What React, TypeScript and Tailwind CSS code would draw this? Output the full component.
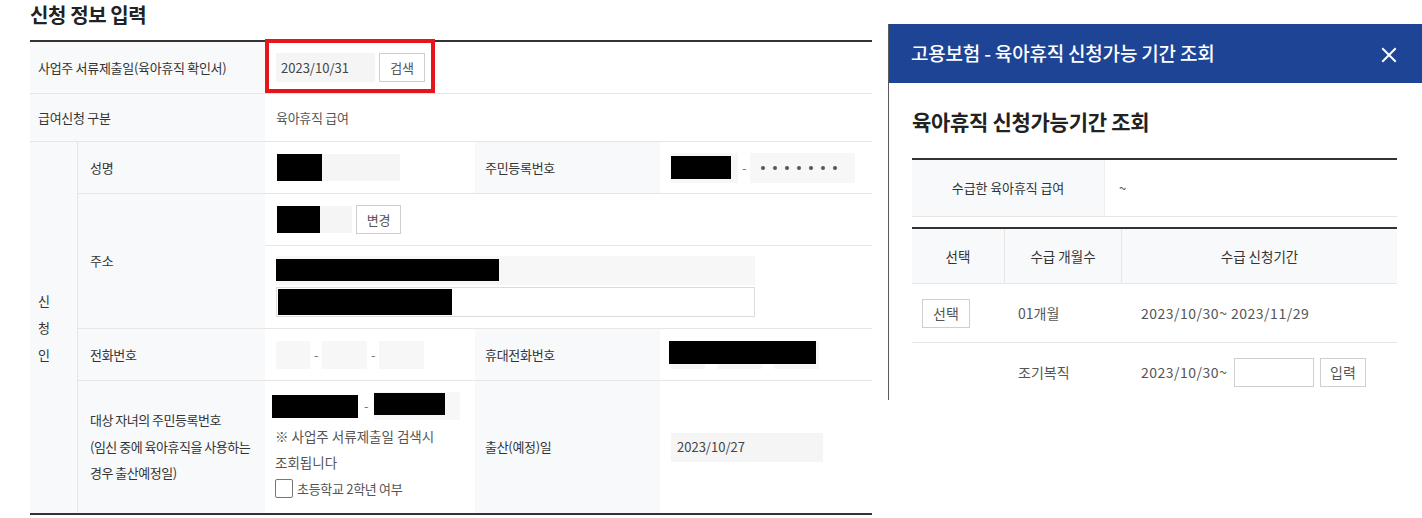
import React from "react";

const LBG = "bg-[#f8f9fb]";

function Btn({ children, w = "w-[46px]", size = "text-[13px]" }: { children: React.ReactNode; w?: string; size?: string }) {
  return (
    <div className={`${w} ${size} h-[29px] border border-[#cfcfcf] bg-white flex items-center justify-center text-[#555] shrink-0`}>
      {children}
    </div>
  );
}

function Dash() {
  return <span className="w-[12px] text-center text-[#777] shrink-0">-</span>;
}

export default function App() {
  return (
    <div className="relative w-[1422px] h-[518px] bg-white overflow-hidden font-['Noto_Sans_CJK_KR',sans-serif] text-[13px] tracking-[-0.3px] text-[#333]">
      {/* Main form */}
      <div className="pl-[30px] pt-[2px]">
        <h2 className="text-[20px] font-bold leading-[26px] h-[38px] text-[#222] tracking-[-0.4px]">신청 정보 입력</h2>
        <div className="w-[842px] border-t-2 border-b-2 border-[#333]">
          {/* row 1 */}
          <div className="flex h-[52px] border-b border-[#e6e6e6]">
            <div className={`w-[235px] ${LBG} flex items-center pl-2`}>사업주 서류제출일(육아휴직 확인서)</div>
            <div className="relative flex-1 flex items-center pl-[11px] gap-[4px]">
              <div className="w-[99px] h-[29px] bg-[#f5f5f5] flex items-center pl-[5px] text-[#444] tracking-normal">2023/10/31</div>
              <Btn>검색</Btn>
              <div className="absolute left-0 top-[-3px] w-[170px] h-[54px] border-4 border-[#e8141c]" />
            </div>
          </div>
          {/* row 2 */}
          <div className="flex h-[48px] border-b border-[#e6e6e6]">
            <div className={`w-[235px] ${LBG} flex items-center pl-2`}>급여신청 구분</div>
            <div className="flex-1 flex items-center pl-[11px] text-[#555]">육아휴직 급여</div>
          </div>
          {/* applicant group */}
          <div className="flex">
            <div className={`w-[48px] ${LBG} border-r border-[#e6e6e6] flex items-center pl-2 leading-[27px]`}>
              신<br />청<br />인
            </div>
            <div className="flex-1 flex flex-col">
              {/* 성명 */}
              <div className="flex h-[52px] border-b border-[#e6e6e6]">
                <div className={`w-[187px] ${LBG} flex items-center pl-3`}>성명</div>
                <div className="w-[210px] flex items-center pl-[12px]">
                  <div className="w-[123px] h-[27px] bg-[#f5f5f5]">
                    <div className="w-[45px] h-full bg-black" />
                  </div>
                </div>
                <div className={`w-[185px] ${LBG} flex items-center pl-[10px]`}>주민등록번호</div>
                <div className="flex-1 flex items-center pl-[11px]">
                  <div className="w-[67px] h-[30px] bg-[#f7f7f7] pt-[3px]">
                    <div className="w-[60px] h-[23px] bg-black" />
                  </div>
                  <Dash />
                  <div className="w-[105px] h-[30px] bg-[#f7f7f7] flex items-center pl-[11px] gap-[8px]">
                    {[0, 1, 2, 3, 4, 5, 6].map((i) => (
                      <span key={i} className="w-[4px] h-[4px] rounded-full bg-[#555]" />
                    ))}
                  </div>
                </div>
              </div>
              {/* 주소 */}
              <div className="flex h-[135px] border-b border-[#e6e6e6]">
                <div className={`w-[187px] ${LBG} flex items-center pl-3`}>주소</div>
                <div className="flex-1 flex flex-col">
                  <div className="h-[52px] border-b border-[#e6e6e6] flex items-center pl-[12px]">
                    <div className="w-[75px] h-[27px] bg-[#f5f5f5]">
                      <div className="w-[43px] h-full bg-black" />
                    </div>
                    <div className="ml-[4px]">
                      <Btn w="w-[45px]">변경</Btn>
                    </div>
                  </div>
                  <div className="flex-1 flex flex-col pl-[11px] pt-[10px] gap-[2px]">
                    <div className="w-[479px] h-[29px] bg-[#f7f7f7] pt-[3px]">
                      <div className="w-[223px] h-[22px] bg-black" />
                    </div>
                    <div className="w-[479px] h-[30px] border border-[#dcdcdc] bg-white p-[1px]">
                      <div className="w-[174px] h-full bg-black" />
                    </div>
                  </div>
                </div>
              </div>
              {/* 전화번호 */}
              <div className="flex h-[52px] border-b border-[#e6e6e6]">
                <div className={`w-[187px] ${LBG} flex items-center pl-3`}>전화번호</div>
                <div className="w-[210px] flex items-center pl-[11px]">
                  <div className="w-[34px] h-[28px] bg-[#f7f7f7]" />
                  <Dash />
                  <div className="w-[45px] h-[28px] bg-[#f7f7f7]" />
                  <Dash />
                  <div className="w-[45px] h-[28px] bg-[#f7f7f7]" />
                </div>
                <div className={`w-[185px] ${LBG} flex items-center pl-[10px]`}>휴대전화번호</div>
                <div className="flex-1 flex items-center pl-[11px]">
                  <div className="relative flex items-center">
                    <div className="w-[34px] h-[28px] bg-[#f7f7f7]" />
                    <Dash />
                    <div className="w-[45px] h-[28px] bg-[#f7f7f7]" />
                    <Dash />
                    <div className="w-[45px] h-[28px] bg-[#f7f7f7]" />
                    <div className="absolute left-[-2px] top-0 w-[147px] h-[23px] bg-black" />
                  </div>
                </div>
              </div>
              {/* 자녀 */}
              <div className="flex h-[132px]">
                <div className={`w-[187px] ${LBG} flex items-center pl-3 leading-[26.5px] tracking-[-0.5px]`}>
                  <div>
                    대상 자녀의 주민등록번호
                    <br />
                    (임신 중에 육아휴직을 사용하는
                    <br />
                    경우 출산예정일)
                  </div>
                </div>
                <div className="w-[210px] flex flex-col pl-[7px] pt-[11px]">
                  <div className="flex items-center h-[28px]">
                    <div className="w-[86px] h-[23px] bg-black" />
                    <div className="w-[16px] text-center text-[#777]">-</div>
                    <div className="w-[86px] h-[28px] bg-[#f7f7f7] pt-[1px]">
                      <div className="w-[71px] h-[22px] bg-black" />
                    </div>
                  </div>
                  <div className="mt-[3px] pl-[3px] leading-[26px] text-[#555] text-[13.5px] tracking-normal">
                    ※ 사업주 서류제출일 검색시
                    <br />
                    조회됩니다
                  </div>
                  <div className="mt-[4px] pl-[3px] flex items-center gap-[4px] h-[19px] text-[#555]">
                    <span className="w-[18px] h-[19px] border border-[#777] rounded-[2px] bg-white shrink-0" />
                    초등학교 2학년 여부
                  </div>
                </div>
                <div className={`w-[185px] ${LBG} flex items-center pl-[10px]`}>출산(예정)일</div>
                <div className="flex-1 flex items-center pl-[11px]">
                  <div className="w-[152px] h-[29px] bg-[#f5f5f5] flex items-center pl-[6px] text-[#444] tracking-normal">2023/10/27</div>
                </div>
              </div>
            </div>
          </div>
        </div>
      </div>

      {/* Popup window */}
      <div className="absolute left-[888px] top-[24px] w-[534px] h-[376px] bg-white border-l border-[#5a5a5a] flex flex-col">
        <div className="h-[59px] bg-[#1e4496] flex items-center justify-between pl-[22px] pr-[25px] shrink-0">
          <span className="text-white text-[19px] font-medium tracking-[-0.2px]">고용보험 - 육아휴직 신청가능 기간 조회</span>
          <svg width="16" height="16" viewBox="0 0 16 16" className="mt-[2px]">
            <path d="M2 2 L14 14 M14 2 L2 14" stroke="white" strokeWidth="2" strokeLinecap="square" />
          </svg>
        </div>
        <div className="pl-[23px] pr-[25px]">
          <h3 className="mt-[24px] text-[21px] font-semibold leading-[28px] text-[#222] tracking-[-0.3px]">육아휴직 신청가능기간 조회</h3>
          <div className="mt-[23px] border-t-2 border-[#333]">
            <div className="flex h-[57px] border-b border-[#e6e6e6]">
              <div className={`w-[193px] ${LBG} border-r border-[#eeeeee] flex items-center justify-center tracking-[-0.1px]`}>수급한 육아휴직 급여</div>
              <div className="flex-1 flex items-center pl-[14px] text-[#555]">~</div>
            </div>
          </div>
          <div className="mt-[10px] border-t-2 border-[#333]">
            <div className={`flex h-[55px] ${LBG} border-b border-[#e6e6e6] text-[13.5px] tracking-normal`}>
              <div className="w-[93px] border-r border-[#e6e6e6] flex items-center justify-center">선택</div>
              <div className="w-[117px] border-r border-[#e6e6e6] flex items-center justify-center">수급 개월수</div>
              <div className="flex-1 flex items-center justify-center">수급 신청기간</div>
            </div>
            <div className="flex h-[59px] border-b border-[#e6e6e6] text-[#555] text-[14px] tracking-normal">
              <div className="w-[93px] flex items-center pl-[10px]">
                <Btn w="w-[48px]" size="text-[14px]">선택</Btn>
              </div>
              <div className="w-[117px] flex items-center pl-[13px]">01개월</div>
              <div className="flex-1 flex items-center pl-[19px] tracking-[0.5px]">2023/10/30~ 2023/11/29</div>
            </div>
            <div className="flex h-[58px] text-[#555] text-[14px] tracking-normal">
              <div className="w-[93px]" />
              <div className="w-[117px] flex items-center pl-[13px]">조기복직</div>
              <div className="flex-1 flex items-center pl-[19px]">
                <span className="tracking-[0.5px]">2023/10/30~</span>
                <div className="ml-[auto] mr-[31px] flex items-center gap-[6px]">
                  <div className="w-[80px] h-[29px] border border-[#cfcfcf] bg-white" />
                  <Btn size="text-[14px]">입력</Btn>
                </div>
              </div>
            </div>
          </div>
        </div>
      </div>
    </div>
  );
}
